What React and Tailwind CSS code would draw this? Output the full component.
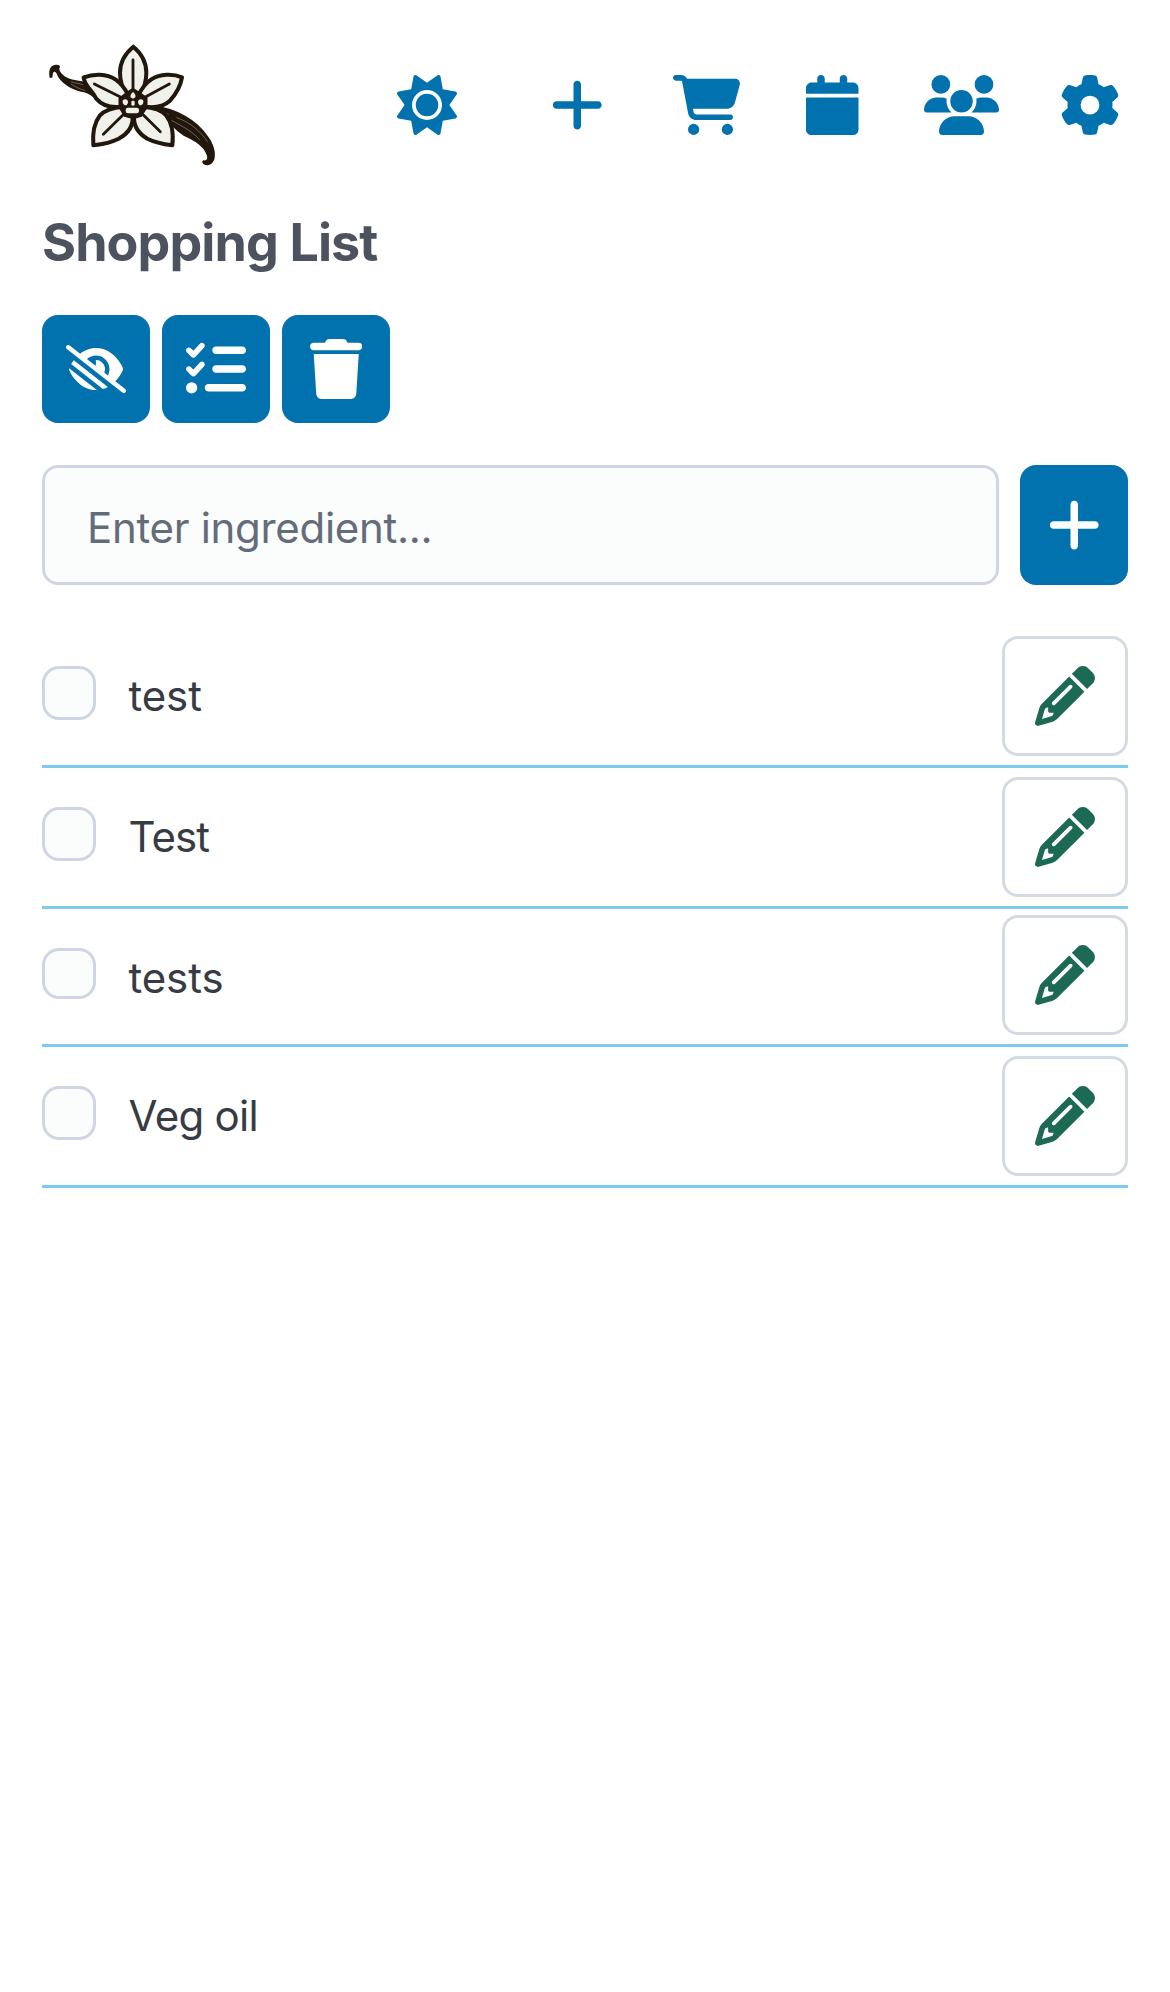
import {
  FaSun,
  FaPlus,
  FaCartShopping,
  FaCalendar,
  FaUsers,
  FaGear,
  FaEyeLowVision,
  FaListCheck,
  FaTrash,
  FaPencil,
} from "react-icons/fa6";

function VanillaLogo() {
  return (
    <svg className="h-[150px] w-[210px]" viewBox="0 0 630 450" fill="none" strokeLinecap="round" strokeLinejoin="round">
      <path
        d="M59 143C55 122 60 107 74 105C83 103 90 105 90 111C84 120 93 131 106 140C122 150 145 150 168 156L240 232C210 225 190 194 162 187C130 181 100 165 84 140C80 130 77 122 71 126C67 130 69 137 67 143Z"
        fill="#21170d"
      />
      <path
        d="M370 226C440 236 500 268 536 322C552 345 557 368 554 384C550 403 533 411 521 403C515 398 516 391 522 391C530 393 534 385 530 375C522 352 500 336 470 322C445 310 430 290 415 280Z"
        fill="#21170d"
      />
      <path
        d="M124 156C138 159 148 161 158 164M124 163C138 172 150 177 164 181M402 246L415 253M416 266C440 282 480 296 508 328M440 263C480 277 508 300 532 334"
        stroke="#a8a297"
        strokeWidth="1.6"
      />
      <g fill="#f0f1ea" stroke="#21170d" strokeWidth="12">
        <path d="M310 50C286 70 270 98 270 128C270 150 278 176 290 196H330C342 176 349 150 349 128C349 98 334 70 310 50Z" />
        <path d="M161 142C190 131 230 130 256 148C274 160 286 178 294 194L274 230C246 234 218 228 198 205C186 180 162 166 161 142Z" />
        <path d="M456 142C430 131 390 131 364 148C346 160 334 178 326 194L346 230C374 234 400 230 420 212C438 192 452 166 456 142Z" />
        <path d="M190 346C187 310 193 278 210 256C228 236 256 232 280 230L308 258C310 290 292 312 266 326C242 338 214 343 190 346Z" />
        <path d="M427 346C431 310 426 278 408 256C392 236 364 232 338 230L312 258C310 290 328 312 352 326C376 338 404 343 427 346Z" />
      </g>
      <path
        d="M309 90V180M193 162L276 203M418 162L342 203M220 313L278 256M391 305L341 256"
        stroke="#21170d"
        strokeWidth="8.5"
      />
      <path d="M309 176L328 188L350 204L350 232L334 258L310 265L284 258L268 232L268 206L290 188Z" fill="#21170d" stroke="#21170d" strokeWidth="5" />
      <g fill="#f0f1ea">
        <path d="M309 186C315 190 318 198 316 202L309 206L302 202C300 198 303 190 309 186Z" />
        <path d="M279 210C286 205 294 209 294 215C294 221 291 226 285 226C279 224 276 216 279 210Z" />
        <path d="M339 210C332 205 324 209 324 215C324 221 327 226 333 226C339 224 342 216 339 210Z" />
        <rect x="304" y="212" width="10" height="15" rx="4" />
        <rect x="287" y="233" width="40" height="17" rx="7" />
      </g>
    </svg>
  );
}

const navItems = [
  { Icon: FaSun, label: "Theme", cls: "w-[60px]" },
  { Icon: FaPlus, label: "Add", cls: "ml-[94px] w-[52.5px]" },
  { Icon: FaCartShopping, label: "Shopping", cls: "ml-[69px] w-[67.5px]" },
  { Icon: FaCalendar, label: "Calendar", cls: "ml-[66px] w-[52.5px]" },
  { Icon: FaUsers, label: "Groups", cls: "ml-[65.25px] w-[75px]" },
  { Icon: FaGear, label: "Settings", cls: "ml-[61.25px] w-[60px]" },
];

const actions = [
  { Icon: FaEyeLowVision, label: "Hide checked", cls: "h-[60px] w-[60px]" },
  { Icon: FaListCheck, label: "Check all", cls: "h-[60px] w-[60px]" },
  { Icon: FaTrash, label: "Delete", cls: "h-[60px] w-[52.5px]" },
];

const items = [
  { name: "test", row: "h-[141px]", edit: "mt-[9px]", box: "h-[54px]", text: "tracking-[-0.1px]" },
  { name: "Test", row: "h-[141px]", edit: "mt-[9px]", box: "h-[54px]", text: "tracking-[-0.9px]" },
  { name: "tests", row: "h-[138px]", edit: "mt-[6px]", box: "h-[51px]", text: "tracking-[-0.1px]" },
  { name: "Veg oil", row: "h-[141px]", edit: "mt-[9px]", box: "h-[54px]", text: "tracking-[-0.7px]" },
];

export default function App() {
  return (
    <div className="min-h-[1992px] w-[1170px] bg-white font-['Inter',sans-serif] text-[#373c44]">
      <header className="flex h-[210px] pt-[30px] pr-[49.75px] pl-[30px]">
        <VanillaLogo />
        <nav className="mt-[45px] ml-auto flex h-[60px] text-[#0172ad]">
          {navItems.map(({ Icon, label, cls }) => (
            <a key={label} aria-label={label} className={cls}>
              <Icon className="h-full w-full" />
            </a>
          ))}
        </nav>
      </header>

      <main className="px-[42px]">
        <h1 className="h-[105px] text-[52px] leading-[65px] font-bold tracking-[-0.9px] whitespace-nowrap text-[#4d535e]">
          Shopping List
        </h1>

        <div className="flex gap-3">
          {actions.map(({ Icon, label, cls }) => (
            <button
              key={label}
              aria-label={label}
              className="flex h-[108px] w-[108px] items-center justify-center rounded-[16px] bg-[#0172ad] text-white"
            >
              <Icon className={cls} />
            </button>
          ))}
        </div>

        <form className="mt-[42px] flex h-[120px] gap-[21px]">
          <input
            placeholder="Enter ingredient..."
            className="min-w-0 flex-1 rounded-[16px] border-[3px] border-[#cfd5e2] bg-[#fbfcfc] px-[42px] pt-[5px] text-[42px] tracking-[-0.3px] placeholder:text-[#646b79]"
          />
          <button
            type="button"
            aria-label="Add ingredient"
            className="flex w-[108px] items-center justify-center rounded-[16px] bg-[#0172ad] text-white"
          >
            <FaPlus className="h-[60px] w-[52.5px]" />
          </button>
        </form>

        <ul className="mt-[42px]">
          {items.map(({ name, row, edit, box, text }) => (
            <li key={name} className={`flex items-start border-b-[3px] border-[#7ecbf2] ${row}`}>
              <label className="flex flex-1 items-start">
                <input
                  type="checkbox"
                  className={`mt-[39px] w-[54px] appearance-none rounded-[17px] border-[3px] border-[#cfd5e2] bg-[#fbfcfc] ${box}`}
                />
                <span className={`mt-[39px] ml-[32.5px] text-[42px] leading-[60px] ${text}`}>{name}</span>
              </label>
              <button
                aria-label={`Edit ${name}`}
                className={`flex h-[120px] w-[126px] items-center justify-center rounded-[16px] border-[3px] border-[#d5dae2] text-[#1d6a54] ${edit}`}
              >
                <FaPencil className="h-[60px] w-[60px]" />
              </button>
            </li>
          ))}
        </ul>
      </main>
    </div>
  );
}
